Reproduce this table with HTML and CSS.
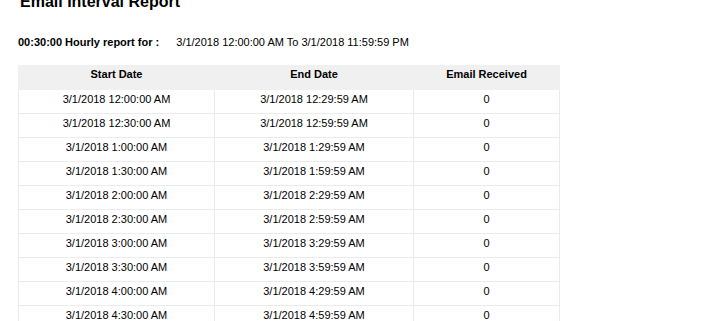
FILE: index.html
```html
<!DOCTYPE html>
<html>
<head>
<meta charset="utf-8">
<link rel="stylesheet" href="styles.css">
</head>
<body>
<div class="report">
  <h1 class="title">Email Interval Report</h1>
  <div class="summary">
    <span class="label">00:30:00 Hourly report for :</span>
    <span class="range">3/1/2018 12:00:00 AM To 3/1/2018 11:59:59 PM</span>
  </div>
  <table class="grid">
    <colgroup>
      <col class="c1"><col class="c2"><col class="c3">
    </colgroup>
    <thead>
      <tr><th>Start Date</th><th>End Date</th><th>Email Received</th></tr>
    </thead>
    <tbody>
      <tr><td>3/1/2018 12:00:00 AM</td><td>3/1/2018 12:29:59 AM</td><td>0</td></tr>
      <tr><td>3/1/2018 12:30:00 AM</td><td>3/1/2018 12:59:59 AM</td><td>0</td></tr>
      <tr><td>3/1/2018 1:00:00 AM</td><td>3/1/2018 1:29:59 AM</td><td>0</td></tr>
      <tr><td>3/1/2018 1:30:00 AM</td><td>3/1/2018 1:59:59 AM</td><td>0</td></tr>
      <tr><td>3/1/2018 2:00:00 AM</td><td>3/1/2018 2:29:59 AM</td><td>0</td></tr>
      <tr><td>3/1/2018 2:30:00 AM</td><td>3/1/2018 2:59:59 AM</td><td>0</td></tr>
      <tr><td>3/1/2018 3:00:00 AM</td><td>3/1/2018 3:29:59 AM</td><td>0</td></tr>
      <tr><td>3/1/2018 3:30:00 AM</td><td>3/1/2018 3:59:59 AM</td><td>0</td></tr>
      <tr><td>3/1/2018 4:00:00 AM</td><td>3/1/2018 4:29:59 AM</td><td>0</td></tr>
      <tr><td>3/1/2018 4:30:00 AM</td><td>3/1/2018 4:59:59 AM</td><td>0</td></tr>
      <tr><td>3/1/2018 5:00:00 AM</td><td>3/1/2018 5:29:59 AM</td><td>0</td></tr>
      <tr><td>3/1/2018 5:30:00 AM</td><td>3/1/2018 5:59:59 AM</td><td>0</td></tr>
    </tbody>
  </table>
</div>
</body>
</html>
```
FILE: styles.css
```css
html, body {
  margin: 0;
  padding: 0;
  background: #fff;
  overflow: hidden;
}
body {
  font-family: "Liberation Sans", Arial, sans-serif;
  color: #000;
}
.report {
  padding-left: 18px;
}
.title {
  margin: -7px 0 0 2px;
  font-size: 16px;
  line-height: 18px;
  font-weight: bold;
}
.summary {
  margin-top: 25px;
  font-size: 11px;
  line-height: 13px;
}
.label {
  font-weight: bold;
}
.range {
  margin-left: 14px;
}
.grid {
  margin-top: 16px;
  border-collapse: collapse;
  font-size: 11px;
  line-height: 13px;
  table-layout: fixed;
  width: 541px;
}
.c1 { width: 196px; }
.c2 { width: 199px; }
.c3 { width: 146px; }
.grid th {
  background: #f0f0f0;
  font-weight: bold;
  padding: 3px 0 8px;
  text-align: center;
  border: 1px solid #f0f0f0;
  border-top: 0;
}
.grid td {
  padding: 3px 0 7px;
  text-align: center;
  border: 1px solid #ebebeb;
}
```
